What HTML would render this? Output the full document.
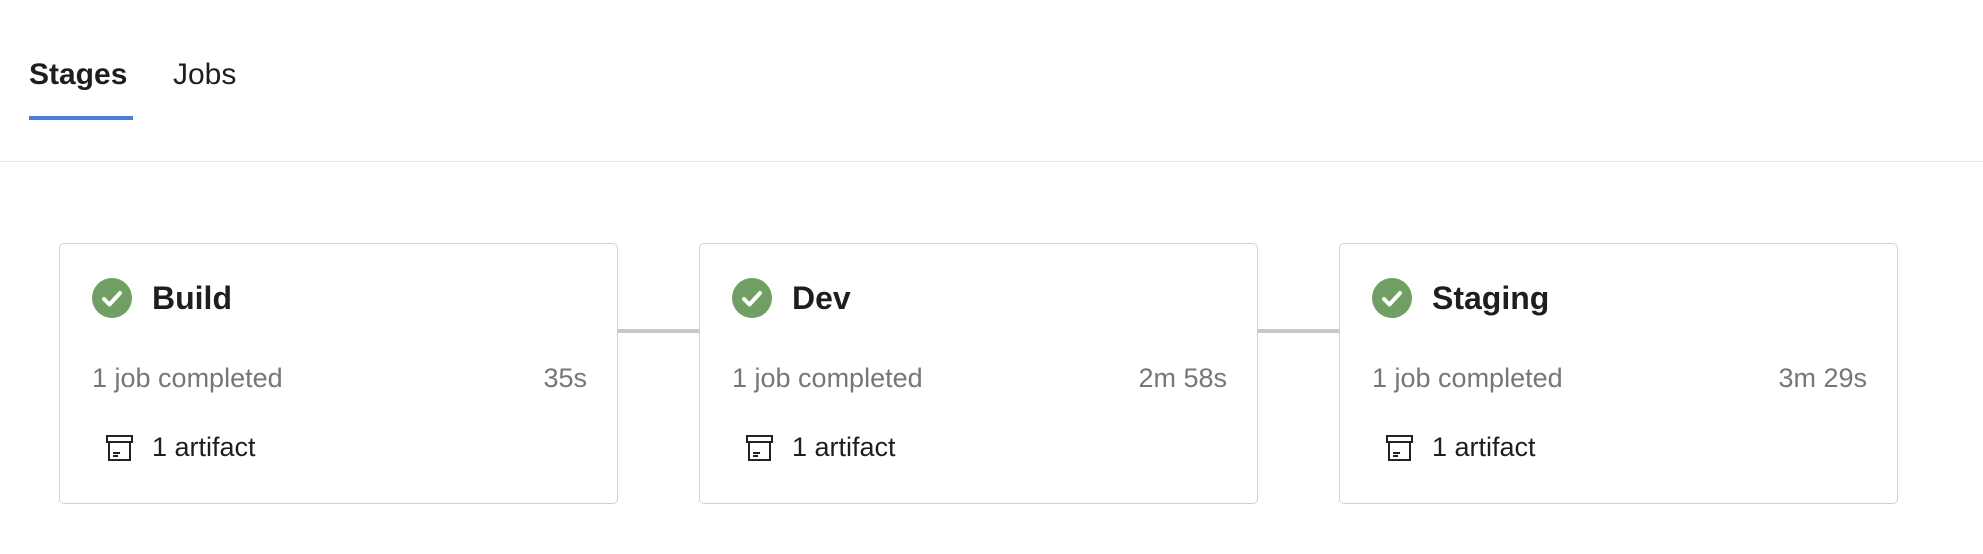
<!DOCTYPE html>
<html><head><meta charset="utf-8"><style>
body{margin:0;width:1983px;height:554px;background:#fff;font-family:"Liberation Sans",sans-serif;position:relative;overflow:hidden}
.tab{position:absolute;top:58px;font-size:30px;color:#1e1e1e}
.ul{position:absolute;left:29px;top:116px;width:104px;height:4px;background:#4a7fd6}
.sep{position:absolute;left:0;top:161px;width:1983px;height:1px;background:#e6e6e6}
.conn{position:absolute;top:329px;height:4px;background:#c8c8c8}
.card{position:absolute;top:243px;width:559px;height:261px;border:1px solid #d2d2d2;border-radius:5px;box-sizing:border-box;background:#fff}
.chk{position:absolute;left:32px;top:34px;width:40px;height:40px;border-radius:50%;background:#6f9f62}
.title{position:absolute;left:92px;top:36px;font-size:32px;font-weight:bold;color:#1e1e1e}
.sub{position:absolute;left:32px;top:119px;font-size:27px;color:#767676}
.time{position:absolute;right:30px;top:119px;font-size:27px;color:#767676}
.art{position:absolute;left:92px;top:188px;font-size:27px;color:#1e1e1e}
.ic{position:absolute;left:45px;top:189px}
</style></head><body>
<div class="tab" style="left:29px;font-weight:bold">Stages</div>
<div class="tab" style="left:173px">Jobs</div>
<div class="ul"></div>
<div class="sep"></div>
<div class="conn" style="left:617px;width:82px"></div>
<div class="conn" style="left:1258px;width:82px"></div>

<div class="card" style="left:59px">
<div class="chk"><svg width="40" height="40"><path d="M12 21 L17.5 26.5 L28 15" stroke="#fff" stroke-width="4" fill="none" stroke-linecap="round" stroke-linejoin="round"/></svg></div>
<div class="title">Build</div>
<div class="sub">1 job completed</div><div class="time">35s</div>
<svg class="ic" width="30" height="30"><path d="M2 3h25v6H2zM4 9v18h21V9M8 20h7M8 23h5" stroke="#222" stroke-width="2" fill="none"/></svg>
<div class="art">1 artifact</div>
</div>

<div class="card" style="left:699px">
<div class="chk"><svg width="40" height="40"><path d="M12 21 L17.5 26.5 L28 15" stroke="#fff" stroke-width="4" fill="none" stroke-linecap="round" stroke-linejoin="round"/></svg></div>
<div class="title">Dev</div>
<div class="sub">1 job completed</div><div class="time">2m 58s</div>
<svg class="ic" width="30" height="30"><path d="M2 3h25v6H2zM4 9v18h21V9M8 20h7M8 23h5" stroke="#222" stroke-width="2" fill="none"/></svg>
<div class="art">1 artifact</div>
</div>

<div class="card" style="left:1339px">
<div class="chk"><svg width="40" height="40"><path d="M12 21 L17.5 26.5 L28 15" stroke="#fff" stroke-width="4" fill="none" stroke-linecap="round" stroke-linejoin="round"/></svg></div>
<div class="title">Staging</div>
<div class="sub">1 job completed</div><div class="time">3m 29s</div>
<svg class="ic" width="30" height="30"><path d="M2 3h25v6H2zM4 9v18h21V9M8 20h7M8 23h5" stroke="#222" stroke-width="2" fill="none"/></svg>
<div class="art">1 artifact</div>
</div>
</body></html>
